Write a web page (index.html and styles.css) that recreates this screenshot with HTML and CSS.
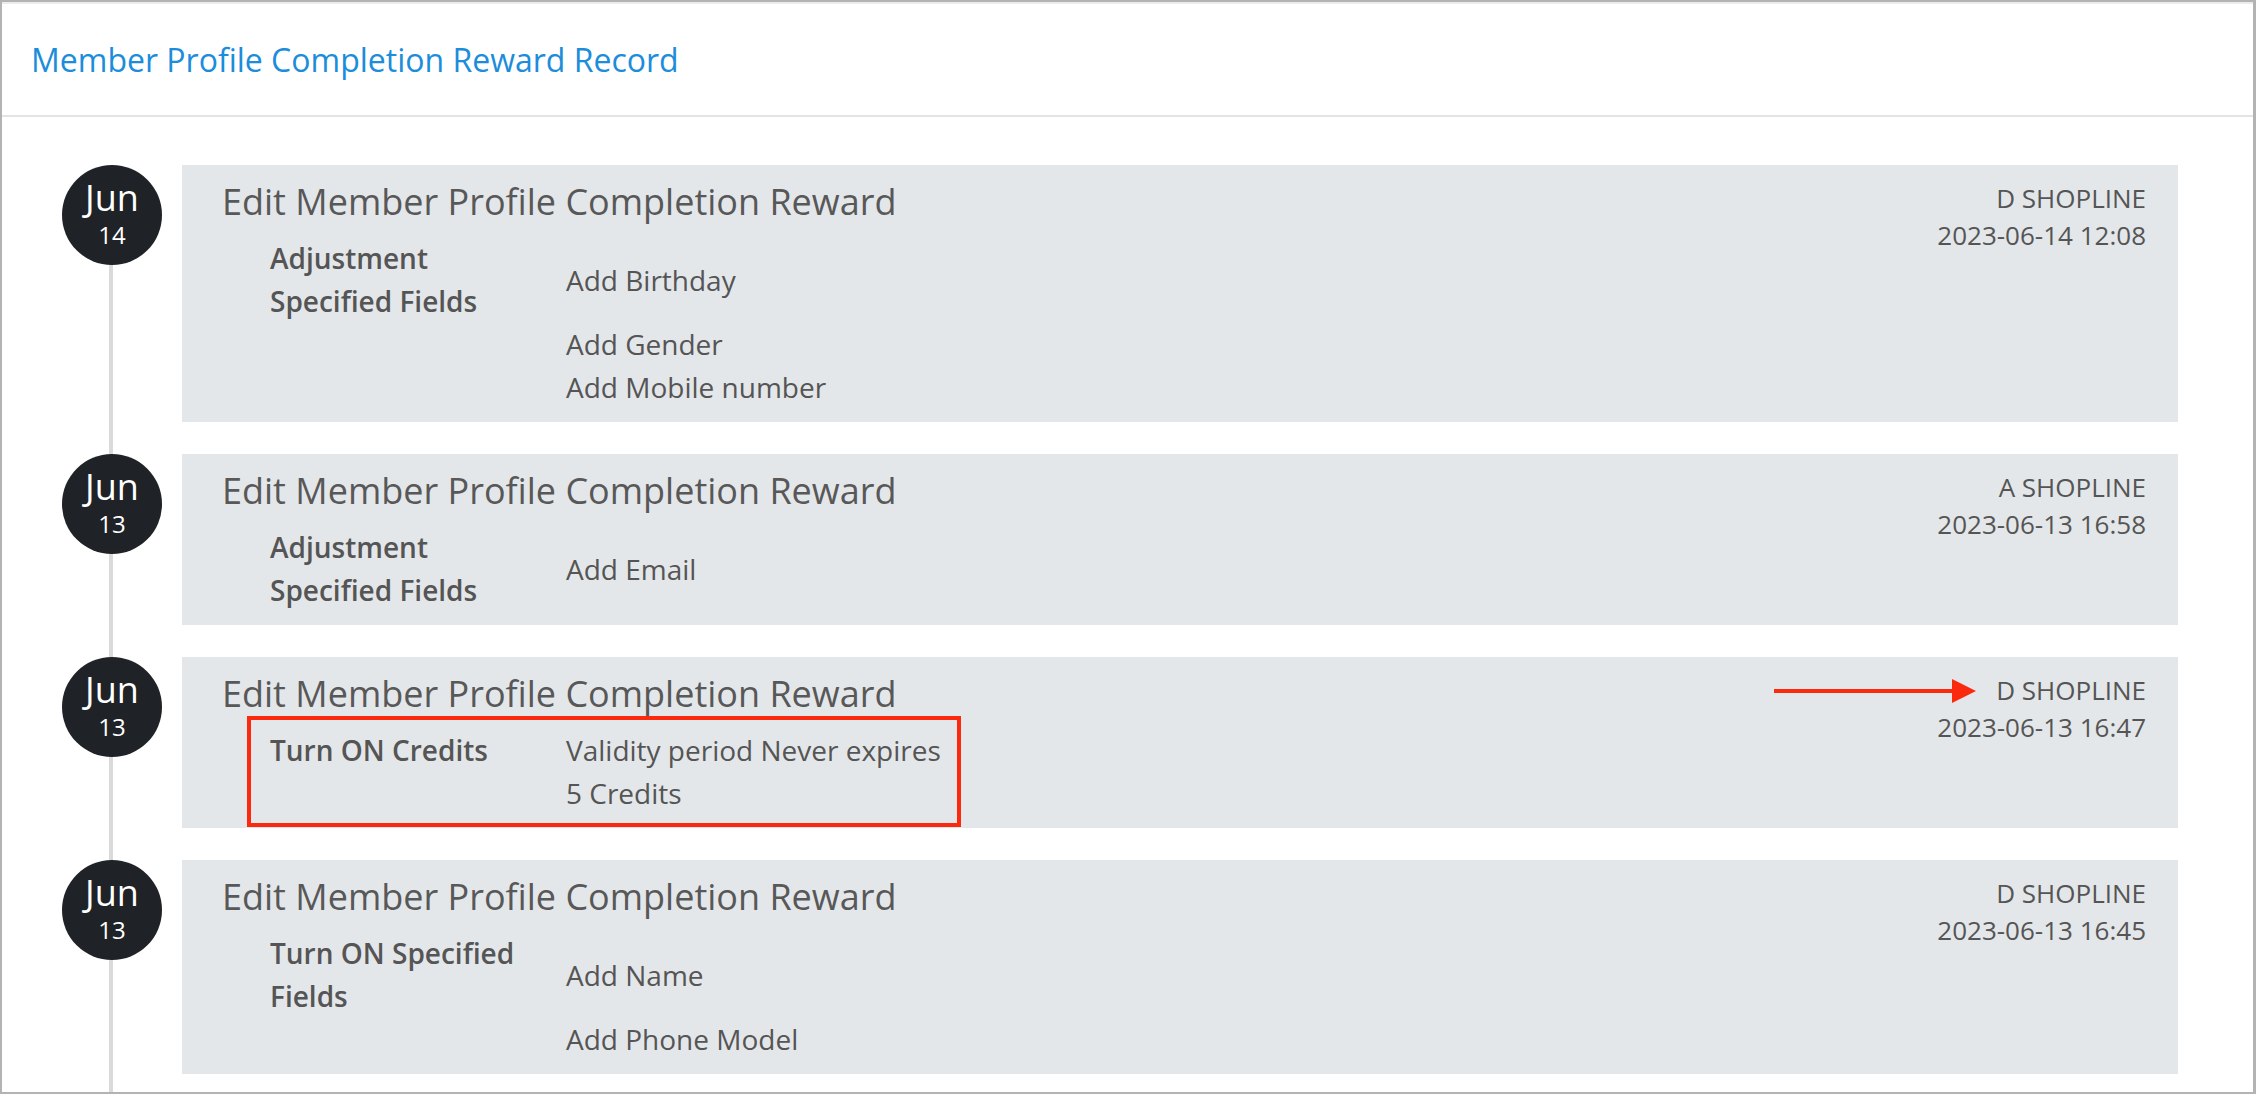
FILE: index.html
```html
<!DOCTYPE html>
<html lang="en">
<head>
  <meta charset="UTF-8" />
  <meta name="viewport" content="width=device-width, initial-scale=1.0" />
  <title>Member Profile Completion Reward Record</title>
  <link rel="stylesheet" href="styles.css">
</head>
<body>
  <div class="frame">
    <div class="panel-head">Member Profile Completion Reward Record</div>

    <div class="timeline">
      <div class="item">
        <div class="date"><span class="month">Jun</span><span class="day">14</span></div>
        <div class="card">
          <div class="card-title">Edit Member Profile Completion Reward</div>
          <div class="meta">D SHOPLINE<br>2023-06-14 12:08</div>
          <table class="changes">
            <tr><td class="label">Adjustment Specified Fields</td><td>Add Birthday</td></tr>
            <tr><td class="label"></td><td>Add Gender</td></tr>
            <tr><td class="label"></td><td>Add Mobile number</td></tr>
          </table>
        </div>
      </div>

      <div class="item">
        <div class="date"><span class="month">Jun</span><span class="day">13</span></div>
        <div class="card">
          <div class="card-title">Edit Member Profile Completion Reward</div>
          <div class="meta">A SHOPLINE<br>2023-06-13 16:58</div>
          <table class="changes">
            <tr><td class="label">Adjustment Specified Fields</td><td>Add Email</td></tr>
          </table>
        </div>
      </div>

      <div class="item">
        <div class="date"><span class="month">Jun</span><span class="day">13</span></div>
        <div class="card">
          <div class="card-title">Edit Member Profile Completion Reward</div>
          <div class="meta">
            <span class="by">
              <svg class="arrow" width="202" height="24" viewBox="0 0 202 24">
                <rect x="0" y="10" width="180" height="4" fill="#fb2a0f"/>
                <polygon points="178,0 202,12 178,24" fill="#fb2a0f"/>
              </svg>D SHOPLINE</span><br>2023-06-13 16:47
          </div>
          <div class="highlight">
            <table class="changes">
              <tr><td class="label">Turn ON Credits</td><td>Validity period Never expires</td></tr>
              <tr><td class="label"></td><td>5 Credits</td></tr>
            </table>
          </div>
        </div>
      </div>

      <div class="item">
        <div class="date"><span class="month">Jun</span><span class="day">13</span></div>
        <div class="card">
          <div class="card-title">Edit Member Profile Completion Reward</div>
          <div class="meta">D SHOPLINE<br>2023-06-13 16:45</div>
          <table class="changes">
            <tr><td class="label">Turn ON Specified Fields</td><td>Add Name</td></tr>
            <tr><td class="label"></td><td>Add Phone Model</td></tr>
          </table>
        </div>
      </div>
    </div>
  </div>
</body>
</html>
```

FILE: styles.css
```css
body {
  margin: 0;
  background-color: #fff;
  font-family: 'Open Sans', 'Noto Sans', sans-serif;
  color: #555;
}

.frame {
  height: 100vh;
  box-sizing: border-box;
  border: 2px solid #b3b3b3;
  border-right-width: 3px;
  overflow: hidden;
}

.panel-head {
  height: 115px;
  box-sizing: border-box;
  padding: 1px 29px 0;
  line-height: 114px;
  font-size: 32px;
  color: #1b8ddb;
  border-bottom: 2px solid #e3e3e3;
  box-shadow: inset 0 2px 0 #ececec;
}

.timeline {
  position: relative;
  padding: 48px 75px 0 60px;
}

.timeline::before {
  content: "";
  position: absolute;
  left: 107px;
  top: 98px;
  bottom: -200px;
  width: 4px;
  background-color: #dadada;
}

.item {
  position: relative;
  display: flex;
  gap: 20px;
  margin-bottom: 32px;
}

.date {
  position: relative;
  flex: 0 0 100px;
  height: 100px;
  border-radius: 50%;
  background-color: #1f2226;
  color: #fff;
  display: flex;
  flex-direction: column;
  align-items: center;
  justify-content: center;
  padding-bottom: 3px;
  box-sizing: border-box;
}

.month {
  font-size: 36px;
  line-height: 36px;
}

.day {
  font-size: 24px;
  line-height: 24px;
  margin-top: 7px;
}

.card {
  flex: 1;
  background-color: #e4e7ea;
  padding: 16px 32px 13px 40px;
  display: grid;
  grid-template-columns: 1fr auto;
  align-items: start;
}

.card-title {
  grid-column: 1;
  grid-row: 1;
  font-size: 36px;
  line-height: 42px;
  margin-bottom: 14px;
  color: #585858;
}

.meta {
  grid-column: 2;
  grid-row: 1 / 3;
  margin-top: -1px;
  font-size: 26px;
  line-height: 37px;
  text-align: right;
}

.by {
  position: relative;
}

.arrow {
  position: absolute;
  right: 100%;
  top: 7px;
  margin-right: 20px;
}

.changes {
  grid-column: 1;
  grid-row: 2;
  margin-left: 48px;
  border-collapse: collapse;
  font-size: 28px;
  line-height: 43px;
}

.changes td {
  padding: 0;
  vertical-align: middle;
}

.changes td.label {
  width: 256px;
  padding-right: 40px;
  font-weight: 600;
}

.highlight {
  grid-column: 1;
  grid-row: 2;
  justify-self: start;
  margin: -13px 0 -12px 25px;
  padding: 9px 16px 8px 19px;
  border: 4px solid #fb2a0f;
}

.highlight .changes {
  margin-left: 0;
}
```
